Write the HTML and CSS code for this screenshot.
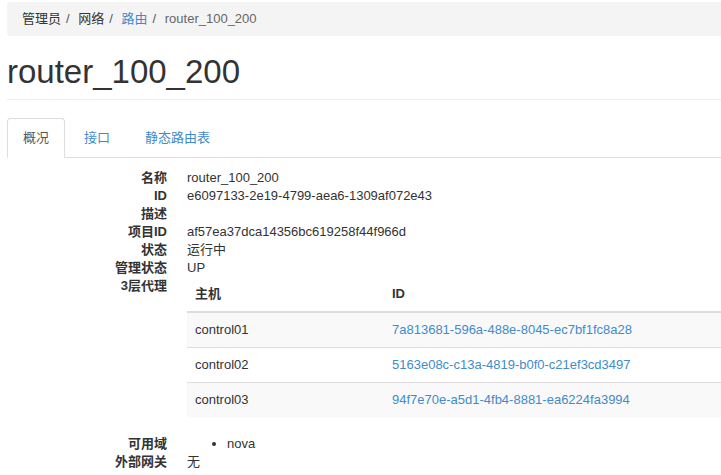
FILE: index.html
```html
<!DOCTYPE html>
<html lang="zh-CN">
<head>
<meta charset="utf-8">
<title>router_100_200</title>
<link rel="stylesheet" href="styles.css">
</head>
<body>
<div class="page">
  <ol class="breadcrumb">
    <li>管理员</li>
    <li>网络</li>
    <li><a href="#">路由</a></li>
    <li class="active">router_100_200</li>
  </ol>
  <div class="page-header">
    <h1>router_100_200</h1>
  </div>
  <ul class="nav-tabs">
    <li class="active"><a href="#">概况</a></li>
    <li><a href="#">接口</a></li>
    <li><a href="#">静态路由表</a></li>
  </ul>
  <div class="tab-content">
    <dl class="detail">
      <dt>名称</dt><dd>router_100_200</dd>
      <dt>ID</dt><dd>e6097133-2e19-4799-aea6-1309af072e43</dd>
      <dt>描述</dt><dd></dd>
      <dt>项目ID</dt><dd>af57ea37dca14356bc619258f44f966d</dd>
      <dt>状态</dt><dd>运行中</dd>
      <dt>管理状态</dt><dd>UP</dd>
      <dt>3层代理</dt>
      <dd>
        <table class="table">
          <thead>
            <tr><th class="col-host">主机</th><th>ID</th></tr>
          </thead>
          <tbody>
            <tr><td>control01</td><td><a href="#">7a813681-596a-488e-8045-ec7bf1fc8a28</a></td></tr>
            <tr><td>control02</td><td><a href="#">5163e08c-c13a-4819-b0f0-c21ef3cd3497</a></td></tr>
            <tr><td>control03</td><td><a href="#">94f7e70e-a5d1-4fb4-8881-ea6224fa3994</a></td></tr>
          </tbody>
        </table>
      </dd>
      <dt>可用域</dt>
      <dd><ul class="zones"><li>nova</li></ul></dd>
      <dt>外部网关</dt><dd>无</dd>
    </dl>
  </div>
</div>
</body>
</html>
```

FILE: styles.css
```css
html, body {
  overflow: hidden;
}
body {
  margin: 0;
  font-family: "Liberation Sans", "Noto Sans CJK SC", sans-serif;
  font-size: 13px;
  line-height: 18px;
  color: #333;
  background: #fff;
}
a {
  color: #428bca;
  text-decoration: none;
}
.page {
  padding: 2px 0 0 7px;
}
.breadcrumb {
  display: flex;
  list-style: none;
  margin: 0 0 18px;
  padding: 8px 15px;
  background: #f4f4f4;
  border-radius: 4px 0 0 4px;
}
.breadcrumb li + li::before {
  content: "/\00a0";
  padding: 0 5px;
  color: #555;
}
.breadcrumb .active {
  color: #666;
}
.page-header {
  padding-bottom: 9px;
  border-bottom: 1px solid #eee;
  margin: 0 0 18px;
}
.page-header h1 {
  margin: 0;
  font-size: 33px;
  font-weight: 500;
  line-height: 36px;
  color: #333;
}
.nav-tabs {
  display: flex;
  list-style: none;
  margin: 0;
  padding: 0;
  border-bottom: 1px solid #ddd;
}
.nav-tabs li {
  margin-bottom: -1px;
  margin-right: 3px;
}
.nav-tabs a {
  display: block;
  padding: 10px 15px;
  border: 1px solid transparent;
  border-radius: 4px 4px 0 0;
}
.nav-tabs .active a {
  color: #555;
  background: #fff;
  border-color: #ddd #ddd transparent;
}
.tab-content {
  padding-top: 11px;
}
.detail {
  margin: 0;
}
.detail dt {
  float: left;
  clear: left;
  width: 160px;
  text-align: right;
  font-weight: bold;
  white-space: nowrap;
}
.detail dd {
  margin-left: 180px;
  min-height: 18px;
}
.table {
  width: 100%;
  border-collapse: collapse;
  margin-bottom: 18px;
}
.table th,
.table td {
  padding: 8px;
  text-align: left;
  vertical-align: top;
}
.table th {
  font-weight: bold;
  border-bottom: 2px solid #ddd;
}
.table td {
  border-top: 1px solid #ddd;
}
.table tbody tr:nth-child(odd) {
  background: #f9f9f9;
}
.table .col-host {
  width: 181px;
}
.zones {
  margin: 0;
  padding-left: 40px;
}
```
